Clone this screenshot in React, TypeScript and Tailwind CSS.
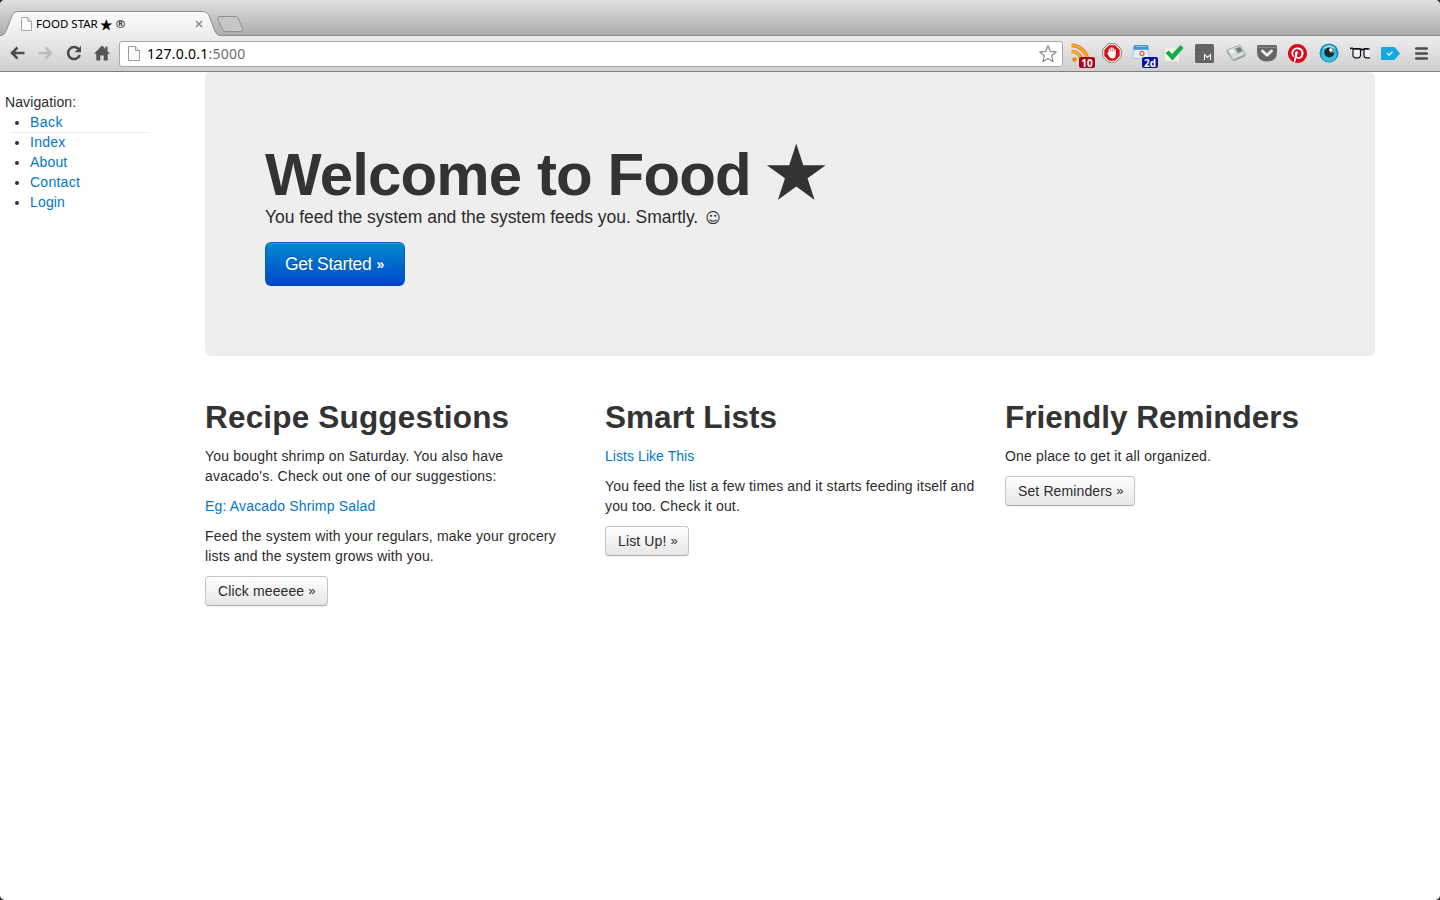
import React from "react";

const sans = "font-['Liberation_Sans',Arial,sans-serif]";
const lucida = "font-['Noto_Sans','Noto_Sans_CJK_JP',sans-serif]";

function PageIcon({ className }: { className: string }) {
  return (
    <svg viewBox="0 0 12 15" className={className}>
      <path d="M.5 .5H7.5L11.5 4.5V14.5H.5Z" fill="#fcfcfc" stroke="#9a9a9a" />
      <path d="M7.5 .5V4.5H11.5" fill="#e8e8e8" stroke="#9a9a9a" />
    </svg>
  );
}

function TabStrip() {
  return (
    <div className="relative h-9 shrink-0 border-b border-[#8d8d8d] bg-gradient-to-b from-[#dfdfdf] to-[#adadad]">
      <svg className="absolute top-0 left-0 h-9 w-[260px]" viewBox="0 0 260 36">
        <defs>
          <linearGradient id="tab" x1="0" y1="0" x2="0" y2="1">
            <stop offset="0" stopColor="#fafafa" />
            <stop offset="1" stopColor="#ededed" />
          </linearGradient>
        </defs>
        <path
          d="M-1 36C4 35 5 33.500 6.500 30L11.500 17C13 13.500 14.500 11.500 19 11.500H202C206.500 11.500 208 13.500 209.500 17L214.500 30C216 33.500 217 35 220 36"
          fill="url(#tab)"
          stroke="#8d8d8d"
        />
        <path
          d="M219.500 16.500H235Q237.500 16.500 238.500 19L242.500 28.500Q243.500 31.500 240.500 31.500H226Q223.500 31.500 222.500 29L217.800 19.500Q217 16.500 219.500 16.500Z"
          fill="#c6c6c6"
          stroke="#8f8f8f"
        />
      </svg>
      <div className="relative flex h-9 w-[205px] items-center pt-[11px] pl-[21px]">
        <PageIcon className="h-[14px] w-[11px]" />
        <span className={`${lucida} ml-1 flex items-center text-[11.500px] tracking-[0px] whitespace-pre text-black`}>
          FOOD STAR<span className="ml-[2px] text-[13px]">★</span>
          <span className="ml-[3px] text-[11.500px]">®</span>
        </span>
        <svg className="mr-[2px] ml-auto h-[8px] w-[8px]" viewBox="0 0 8 8">
          <path d="M1 1L7 7M7 1L1 7" stroke="#8a8a8a" strokeWidth="1.600" />
        </svg>
      </div>
    </div>
  );
}

function Badge({ text, className }: { text: string; className: string }) {
  return (
    <span
      className={`absolute flex h-[11px] w-4 items-center justify-center rounded-[2px] font-['Open_Sans',sans-serif] text-[10px] leading-none font-bold text-white ${className}`}
    >
      {text}
    </span>
  );
}

function Extensions() {
  const cell = "relative flex w-[31px] shrink-0 items-center justify-center";
  return (
    <div className="flex h-[34px] pl-[2px]">
      <div className={cell}>
        <svg className="h-5 w-5" viewBox="0 0 20 20">
          <circle cx="3.500" cy="16.500" r="2.300" fill="#f58a0b" />
          <path d="M.5 8.500A10 9.500 0 0 1 10.500 18.500" fill="none" stroke="#f58a0b" strokeWidth="3.600" />
          <path d="M.5 2.500A16 16 0 0 1 16.500 18.500" fill="none" stroke="#f58a0b" strokeWidth="3.800" />
          <path d="M.5 2.500A16 16 0 0 1 16.500 18.500M.5 8.500A10 9.500 0 0 1 10.500 18.500" fill="none" stroke="#ffbd62" strokeWidth="1.100" />
        </svg>
        <Badge text="10" className="top-[21px] left-[14px] bg-[#a8051a]" />
      </div>
      <div className={cell}>
        <svg className="h-5 w-5" viewBox="0 0 20 20">
          <path d="M6.300 .8H13.700L19.200 6.300V13.700L13.700 19.200H6.300L.8 13.700V6.300Z" fill="#fff" stroke="#777" />
          <path d="M6.900 2.300H13.100L17.700 6.900V13.100L13.100 17.700H6.900L2.300 13.100V6.900Z" fill="#dc0a12" />
          <path d="M7.300 10V6.300M9.200 9V4.800M11.100 9V5M13 10V6.800" stroke="#fff" strokeWidth="1.400" strokeLinecap="round" />
          <path d="M6.600 8.500H13.700V12Q13.500 15.500 10.500 15.500Q8 15.500 7.200 13.500L5.200 10.500Z" fill="#fff" />
        </svg>
      </div>
      <div className={cell}>
        <svg className="mr-1 -mt-[3px] h-[14px] w-[18px]" viewBox="0 0 18 14">
          <path d="M3 .5H15L17.500 12.500Q17.500 13.500 16.500 13.500H1.500Q.5 13.500 .5 12.500Z" fill="#e3eef8" stroke="#a3c2de" />
          <path d="M3 0H15Q16 0 16.200 1L16.800 4.800H1.200L1.800 1Q2 0 3 0Z" fill="#3f93d0" />
          <path d="M3.500 1.500H14.500" stroke="#8cc4ea" />
          <circle cx="10" cy="8.500" r="2" fill="#fff" stroke="#e8604f" strokeWidth="1.300" />
        </svg>
        <Badge text="2d" className="top-[21px] left-[15px] bg-[#0b12a0]" />
      </div>
      <div className={cell}>
        <svg className="h-5 w-5" viewBox="0 0 20 20">
          <path d="M1 5H15V18H1Z" fill="#f4f1e2" />
          <path d="M1.500 10L5 7.500L8 11L16.500 2L19.500 5L8.500 17.500Z" fill="#0fae4d" />
        </svg>
      </div>
      <div className={cell}>
        <svg className="h-[19px] w-[19px]" viewBox="0 0 19 19">
          <rect width="19" height="19" rx="1.500" fill="#626262" />
          <path d="M0 4H19M0 8H19M0 12H19M0 16H19" stroke="#727272" strokeWidth="1" strokeDasharray="2 2" />
          <path d="M9.500 16V10.500L12.500 13.500L15.500 10.500V16" fill="none" stroke="#fff" strokeWidth="1.100" />
        </svg>
      </div>
      <div className={cell}>
        <svg className="h-[18px] w-5" viewBox="0 0 20 18">
          <path d="M.5 6L14 1L19.500 10.500L7 16Z" fill="#ccd4d1" stroke="#a5adaa" strokeWidth=".8" />
          <path d="M7 16L19.500 10.500L19 12.500L7.500 17.500L.8 8.500V6Z" fill="#98a19e" />
          <path d="M3 6.500L7 5L9 8.500L5.200 10Z" fill="#f0f4f3" />
          <path d="M9.500 4.500L14 3L16.500 7L11.800 9Z" fill="#6c7f79" />
          <path d="M6.500 11.500L10 10.200M7.500 13.500L16.500 9.800" stroke="#eef1f0" />
        </svg>
      </div>
      <div className={cell}>
        <svg className="h-[17px] w-5" viewBox="0 0 20 17">
          <path d="M1.500 0H18.500Q20 0 20 1.500V7Q20 16.500 10 16.500Q0 16.500 0 7V1.500Q0 0 1.500 0Z" fill="#66666a" />
          <path d="M1 2.500H19" stroke="#8a8a8c" />
          <path d="M5.500 6L10 10.300L14.500 6" fill="none" stroke="#eee" strokeWidth="2.800" strokeLinecap="round" strokeLinejoin="round" />
        </svg>
      </div>
      <div className={cell}>
        <svg className="h-[19px] w-[19px]" viewBox="0 0 24 24">
          <circle cx="12" cy="12" r="11.500" fill="#fff" />
          <path
            d="M12 0C5.373 0 0 5.372 0 12c0 5.084 3.163 9.426 7.627 11.174-.105-.949-.2-2.405.042-3.441.218-.937 1.407-5.965 1.407-5.965s-.359-.719-.359-1.782c0-1.668.967-2.914 2.171-2.914 1.023 0 1.518.769 1.518 1.690 0 1.029-.655 2.568-.994 3.995-.283 1.194.599 2.169 1.777 2.169 2.133 0 3.772-2.249 3.772-5.495 0-2.873-2.064-4.882-5.012-4.882-3.414 0-5.418 2.561-5.418 5.207 0 1.031.397 2.138.893 2.738.098.119.112.224.083.345l-.333 1.360c-.053.220-.174.267-.402.161-1.499-.698-2.436-2.889-2.436-4.649 0-3.785 2.750-7.262 7.929-7.262 4.163 0 7.398 2.967 7.398 6.931 0 4.136-2.607 7.464-6.227 7.464-1.216 0-2.359-.631-2.750-1.378l-.748 2.853c-.271 1.043-1.002 2.350-1.492 3.146C9.570 23.812 10.763 24 12 24c6.627 0 12-5.373 12-12 0-6.628-5.373-12-12-12z"
            fill="#dc0a1b"
          />
        </svg>
      </div>
      <div className={cell}>
        <svg className="h-5 w-5" viewBox="0 0 20 20">
          <circle cx="10" cy="10" r="9.500" fill="#1c8db0" />
          <circle cx="10" cy="11" r="7.800" fill="#35bfe0" />
          <path d="M3 6Q10 -1.500 17 6Q10 2.500 3 6Z" fill="#b5e6f2" />
          <circle cx="10.300" cy="9.500" r="5" fill="#1b2a30" />
          <path d="M11 4.800A4.700 4.700 0 0 1 15 9.500L11 9.500Z" fill="#8fa0a6" />
          <circle cx="11.500" cy="7" r="1.400" fill="#fff" />
        </svg>
      </div>
      <div className={cell}>
        <svg className="h-3 w-5" viewBox="0 0 20 12">
          <path d="M3 2V8.500Q3.300 10.800 5.500 10.800H8Q10.200 10.800 10.500 8.500V2ZM20 2H14V8.500Q14.300 10.800 16.500 10.800H20" fill="#eef2fc" stroke="#111" strokeWidth="1.200" />
          <path d="M0 2.500V1.200H3M3 1.800H10.500M10.500 3Q12.200 1.800 14 3M14 1.800H18.500" fill="none" stroke="#111" strokeWidth="1.600" />
        </svg>
      </div>
      <div className={cell}>
        <svg className="h-[13px] w-[19px]" viewBox="0 0 19 13">
          <path d="M1.500 0H12.500Q13.500 0 14.200 .8L19 6.500L14.200 12.200Q13.500 13 12.500 13H1.500Q0 13 0 11.500V1.500Q0 0 1.500 0Z" fill="#14a9dc" />
          <path d="M6 6.200L8 8.200L11.500 4.700" fill="none" stroke="#fff" strokeWidth="1.300" />
        </svg>
      </div>
      <div className={cell}>
        <svg className="h-[13px] w-[13px]" viewBox="0 0 13 13">
          <path d="M1.200 1.500H11.800M1.200 6.500H11.800M1.200 11.500H11.800" stroke="#4b4b4b" strokeWidth="2.600" strokeLinecap="round" />
        </svg>
      </div>
    </div>
  );
}

function Toolbar() {
  return (
    <div className="flex h-9 shrink-0 border-b border-[#7f7f7f] bg-gradient-to-b from-[#ededed] to-[#cfcfcf]">
      <div className="flex h-[34px] w-[119px] shrink-0 items-center pl-[9px]">
        <svg className="h-[16px] w-4" viewBox="0 0 16 16">
          <path d="M8.500 2.500L3 8L8.500 13.500M3 8H15.500" fill="none" stroke="#4b4b4b" strokeWidth="2.500" />
        </svg>
        <svg className="ml-[13px] h-[16px] w-4" viewBox="0 0 16 16">
          <path d="M7.500 2.500L13 8L7.500 13.500M13 8H.5" fill="none" stroke="#bcbcbc" strokeWidth="2.500" />
        </svg>
        <svg className="ml-[12px] h-4 w-4" viewBox="0 0 16 16">
          <path d="M12.500 4A6 6 0 1 0 13.800 10" fill="none" stroke="#4b4b4b" strokeWidth="2.500" />
          <path d="M15 .8V7.200H8.600Z" fill="#4b4b4b" />
        </svg>
        <svg className="ml-[12px] h-4 w-4" viewBox="0 0 16 16">
          <path d="M8 .5L11.500 4V1.500H13.500V6L16 8.700H13.700V15.500H9.700V10.500H6.300V15.500H2.300V8.700H0Z" fill="#555" />
        </svg>
      </div>
      <div className="mt-[5px] flex h-[26px] w-[944px] shrink-0 items-center rounded-[3px] border border-[#a9a9a9] bg-white pr-[5px] pb-px pl-2">
        <PageIcon className="h-[15px] w-3" />
        <span className={`${lucida} ml-[7px] text-[14px] tracking-[0.24px] text-black`}>
          127.0.0.1<span className="text-[#6d6d6d]">:5000</span>
        </span>
        <svg className="ml-auto h-[18px] w-[18px]" viewBox="0 0 18 18">
          <path d="M9 .8L11.300 6.300L17.300 6.800L12.700 10.700L14.200 16.700L9 13.400L3.800 16.700L5.300 10.700L.7 6.800L6.700 6.300Z" fill="#fff" stroke="#8a8a8a" strokeWidth="1.200" strokeLinejoin="round" />
        </svg>
      </div>
      <Extensions />
    </div>
  );
}

function Sidebar() {
  const link = "text-[#0077c8]";
  return (
    <nav className="w-[205px] shrink-0 pt-5 pl-[5px]">
      <p className="tracking-[0.1px]">Navigation:</p>
      <ul className="list-disc pl-[25px] marker:text-[#333]">
        <li><a className={`${link} tracking-[0.45px]`}>Back</a></li>
        <li className="relative">
          <span className="absolute top-0 left-[-20px] h-px w-[140px] bg-[#eee]" />
          <a className={`${link} tracking-[0.25px]`}>Index</a>
        </li>
        <li><a className={`${link} tracking-[0.16px]`}>About</a></li>
        <li><a className={`${link} tracking-[0.26px]`}>Contact</a></li>
        <li><a className={`${link} tracking-[0.16px]`}>Login</a></li>
      </ul>
    </nav>
  );
}

function Button({ label, className }: { label: string; className: string }) {
  return (
    <button
      className={`flex h-[30px] items-center rounded-[4px] border border-[#c5c5c5] border-b-[#adadad] bg-gradient-to-b from-white to-[#e6e6e6] pl-3 text-[14px] tracking-[0.12px] text-[#2b2b2b] shadow-[0_1px_2px_rgba(0,0,0,0.05)] ${className}`}
    >
      {label}
      <span className="ml-1 text-[13px]">»</span>
    </button>
  );
}

export default function App() {
  const h2 = "mb-[10px] h-10 text-[31.500px] leading-[42px] font-bold whitespace-nowrap text-[#333]";
  const link = "mb-[10px] text-[#0077c8]";
  return (
    <div className="h-[900px] overflow-hidden bg-[#2b2b35]">
      <div className={`${sans} flex h-full flex-col overflow-hidden rounded-[5px] bg-white text-[14px] leading-5 text-[#2b2b2b]`}>
        <TabStrip />
        <Toolbar />
        <div className="flex">
          <Sidebar />
          <main className="w-[1170px]">
            <section className="h-[284px] rounded-[6px] bg-[#eee] pt-[70px] pl-[60px]">
              <h1 className="flex h-[60px] text-[60px] leading-[66px] font-bold tracking-[-0.88px] whitespace-nowrap text-[#333]">
                Welcome to Food
                <span className="ml-[14px] font-['Noto_Sans_CJK_JP',sans-serif] text-[63px] leading-[52px] font-normal">★</span>
              </h1>
              <p className="flex h-[30px] items-center text-[17.500px] tracking-[-0.03px] whitespace-nowrap">
                You feed the system and the system feeds you. Smartly.
                <span className="mt-px ml-[7px] font-['DejaVu_Sans',sans-serif] text-[15px]">☺</span>
              </p>
              <button className="mt-[10px] flex h-11 w-[140px] items-center rounded-[6px] border border-[#0066bb] border-b-[#0040b0] bg-gradient-to-b from-[#0088cc] to-[#0044cc] pl-[19px] text-[17.500px] tracking-[-0.27px] text-white shadow-[inset_0_1px_0_rgba(255,255,255,0.2)] [text-shadow:0_-1px_0_rgba(0,0,0,0.25)]">
                Get Started<span className="ml-[5px] text-[14px] font-bold">»</span>
              </button>
            </section>
            <div className="flex gap-[30px] pt-10">
              <section className="w-[370px]">
                <h2 className={`${h2} tracking-[0.18px]`}>Recipe Suggestions</h2>
                <p className="mb-[10px] tracking-[0.2px] whitespace-nowrap">
                  You bought shrimp on Saturday. You also have
                  <br />
                  avacado's. Check out one of our suggestions:
                </p>
                <p className={`${link} tracking-[0.17px]`}>Eg: Avacado Shrimp Salad</p>
                <p className="mb-[10px] tracking-[0.175px] whitespace-nowrap">
                  Feed the system with your regulars, make your grocery
                  <br />
                  <span className="tracking-[0.155px]">lists and the system grows with you.</span>
                </p>
                <Button label="Click meeeee" className="w-[123px]" />
              </section>
              <section className="w-[370px]">
                <h2 className={`${h2} tracking-[0.05px]`}>Smart Lists</h2>
                <p className={`${link} tracking-[0.06px]`}>Lists Like This</p>
                <p className="mb-[10px] tracking-[0.155px] whitespace-nowrap">
                  You feed the list a few times and it starts feeding itself and
                  <br />
                  you too. Check it out.
                </p>
                <Button label="List Up!" className="w-[84px]" />
              </section>
              <section className="w-[370px]">
                <h2 className={h2}>Friendly Reminders</h2>
                <p className="mb-[10px] tracking-[0.155px]">One place to get it all organized.</p>
                <Button label="Set Reminders" className="w-[130px]" />
              </section>
            </div>
          </main>
        </div>
      </div>
    </div>
  );
}
